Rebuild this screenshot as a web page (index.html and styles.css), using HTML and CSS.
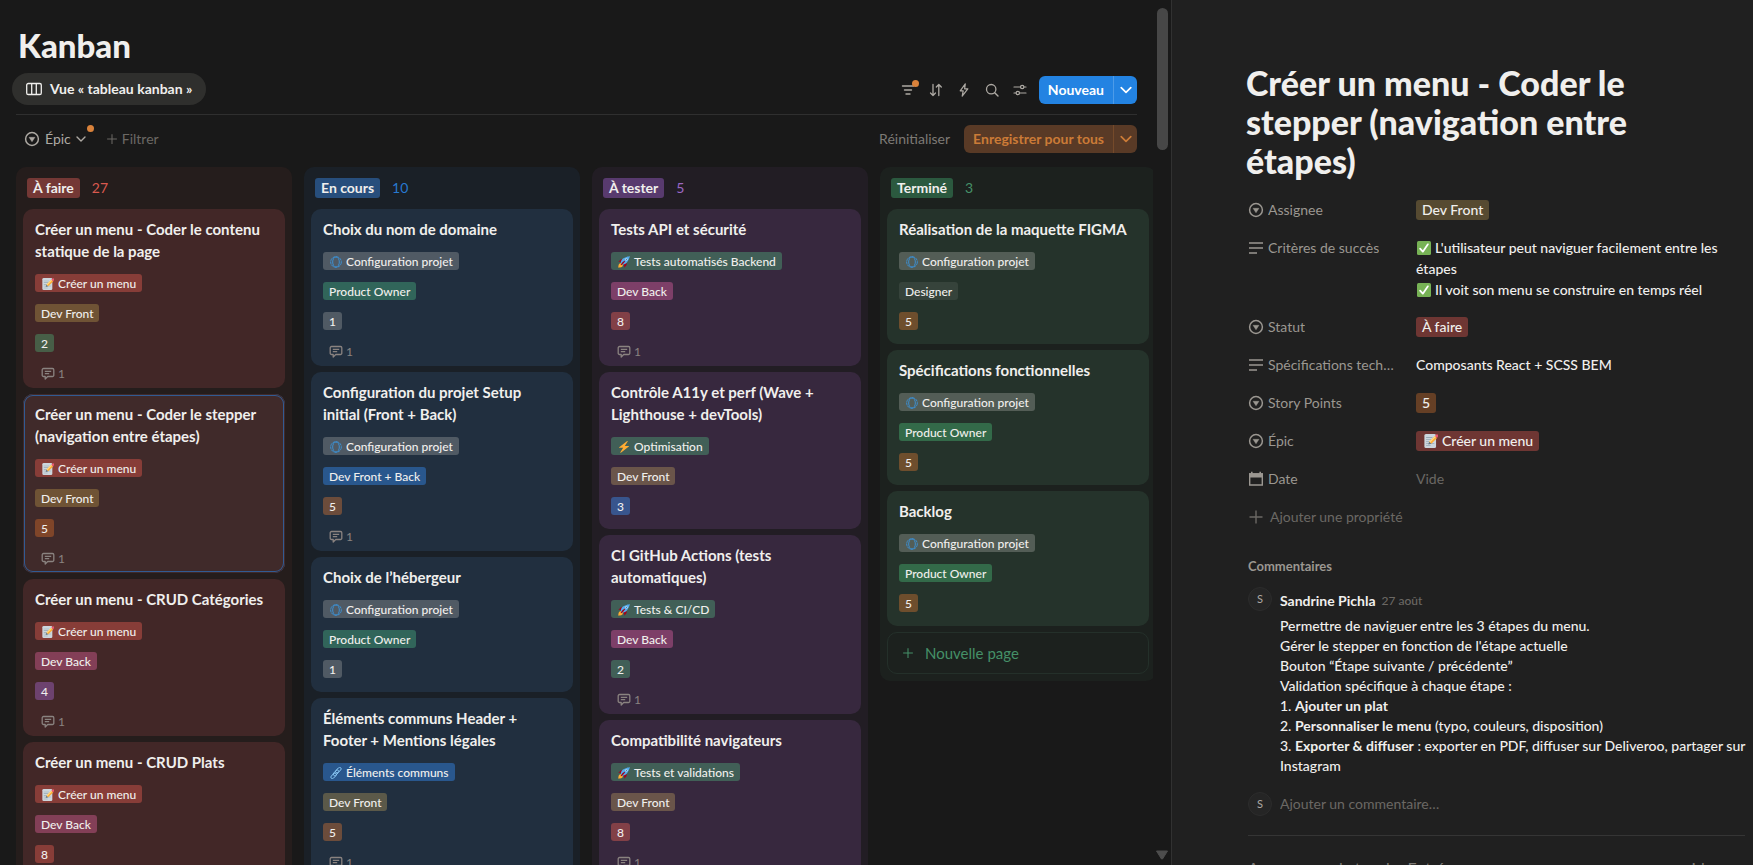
FILE: index.html
```
<!DOCTYPE html>
<html lang="fr">
<head>
<meta charset="utf-8">
<title>Kanban</title>
<link rel="stylesheet" href="styles.css">
</head>
<body>
<svg class="sprite" aria-hidden="true">
  <symbol id="i-memo" viewBox="0 0 36 36"><path fill="#ccd6dd" d="M31 32a4 4 0 0 1-4 4H5a4 4 0 0 1-4-4V4a4 4 0 0 1 4-4h22a4 4 0 0 1 4 4z"/><path fill="#99aab5" d="M27 24a1 1 0 0 1-1 1H6a1 1 0 0 1 0-2h20a1 1 0 0 1 1 1zM18 19a1 1 0 0 1-1 1H6a1 1 0 0 1 0-2h11a1 1 0 0 1 1 1zM22 9a1 1 0 0 1-1 1H6a1 1 0 0 1 0-2h15a1 1 0 0 1 1 1zM19 14a1 1 0 0 1-1 1H6a1 1 0 0 1 0-2h12a1 1 0 0 1 1 1zM17 29H6a1 1 0 0 0 0 2h11z"/><path fill="#66757f" d="M11 27l2.600-7.500 5.300 5.300z"/><path fill="#ffac33" d="M13.400 19.600 28 5l5.500 5.500-14.700 14.600z"/><path fill="#ffd983" d="M13.400 19.600 28 5l2.500 2.500-14.700 14.600z"/><path fill="#ea596e" d="M28 5l3.500-3.500a2.500 2.500 0 0 1 3.600 0l1 1a2.500 2.500 0 0 1 0 3.600L33.500 10.500z"/></symbol>
  <symbol id="i-globe" viewBox="0 0 36 36"><g fill="none" stroke="#3d8fd0"><circle cx="18" cy="18" r="16" stroke-width="3" stroke-dasharray="9 1.500"/><ellipse cx="18" cy="18" rx="10" ry="15" stroke-width="3"/></g></symbol>
  <symbol id="i-rocket" viewBox="0 0 36 36"><path fill="#a0041e" d="M1 17l8-7 16 1 1 16-7 8s.1-5.400-2-10-5-6-7-7-9-1-9-1z"/><path fill="#ffac33" d="M.9 35s-.1-9 3-12 8.500-2.500 10 0 1 7-1.500 9.500S.9 35 .9 35z"/><path fill="#55acee" d="M35.500.5s-10.500 0-21.500 8c-6 5-6 14-4 16s11 2 16-4c8-11 9.500-20 9.500-20z"/><path fill="#a0041e" d="M8.500 27.500c-2-2 9-14 13-14 1 4-11 16-13 14z"/><circle cx="25" cy="10" r="3.500" fill="#e1e8ed"/><circle cx="25" cy="10" r="2" fill="#226699"/></symbol>
  <symbol id="i-bolt-e" viewBox="0 0 36 36"><path fill="#ffac33" d="M33 15.500c-.2-.4-.6-.5-1-.5H20.500L29 1.500c.5-1-.4-1.800-1.400-1.200L3.500 18.800c-.8.600-.5 1.700.5 1.700h11.500L7 34c-.6 1 .5 2 1.500 1.300L32.600 16.800c.4-.3.600-.8.400-1.300z"/></symbol>
  <symbol id="i-link" viewBox="0 0 36 36"><g fill="none" stroke="#8ccaf7" stroke-width="2.800"><rect x="15" y="5" width="20" height="9" rx="4.500" transform="rotate(-45 25 9.500)"/><rect x="8" y="13" width="20" height="9" rx="4.500" transform="rotate(-45 18 17.500)"/><rect x="1" y="22" width="20" height="9" rx="4.500" transform="rotate(-45 11 26.500)"/></g></symbol>
  <symbol id="i-check" viewBox="0 0 36 36"><rect width="36" height="36" rx="4" fill="#77b255"/><path d="M8 19.500l7 8L28 8.500" fill="none" stroke="#fff" stroke-width="4.500" stroke-linecap="round" stroke-linejoin="round"/></symbol>
  <symbol id="i-msg" viewBox="0 0 14 14"><path d="M2.500 1.500h9a1.300 1.300 0 0 1 1.300 1.300v5.400a1.300 1.300 0 0 1-1.300 1.300H6.700L4.200 12V9.500H2.500a1.300 1.300 0 0 1-1.300-1.300V2.800a1.300 1.300 0 0 1 1.300-1.300zM3.800 4.300h6.400M3.800 6.700h4.400" fill="none" stroke="currentColor" stroke-width="1.300" stroke-linejoin="round"/></symbol>
  <symbol id="i-select" viewBox="0 0 16 16"><circle cx="8" cy="8" r="6.400" fill="none" stroke="currentColor" stroke-width="1.500"/><path d="M5 6.300h6L8 10.800z" fill="currentColor" stroke="currentColor" stroke-width=".4" stroke-linejoin="round"/></symbol>
  <symbol id="i-text" viewBox="0 0 16 16"><path d="M1 3h14M1 8h14M1 13h8" stroke="currentColor" stroke-width="1.600"/></symbol>
  <symbol id="i-cal" viewBox="0 0 16 16"><path d="M1.700 3h12.600v11H1.700z" fill="none" stroke="currentColor" stroke-width="1.400"/><path d="M1 2.300h14v4.200H1zM3 .8h1.600v2H3zM11.400.8H13v2h-1.600z" fill="currentColor"/></symbol>
  <symbol id="i-plus" viewBox="0 0 16 16"><path d="M8 1.500v13M1.500 8h13" stroke="currentColor" stroke-width="1.400"/></symbol>
  <symbol id="i-chev" viewBox="0 0 10 10"><path d="M1 3l4 4 4-4" fill="none" stroke="currentColor" stroke-width="1.400" stroke-linecap="round" stroke-linejoin="round"/></symbol>
</svg>

<div class="app">
  <main class="pane">
    <div class="content">
      <header class="head">
        <h1>Kanban</h1>
        <div class="toolbar">
          <button class="view" type="button">
            <svg class="ic16" viewBox="0 0 16 16"><path d="M2.300 2.500h11.400a1.600 1.600 0 0 1 1.600 1.600v7.800a1.600 1.600 0 0 1-1.600 1.600H2.300a1.600 1.600 0 0 1-1.600-1.600V4.100a1.600 1.600 0 0 1 1.600-1.600zM5.700 2.500v11M10.300 2.500v11" fill="none" stroke="currentColor" stroke-width="1.300"/></svg>
            Vue « tableau kanban »
          </button>
          <div class="tools">
            <button class="tool" type="button" aria-label="Filtrer la vue"><svg class="ic16" viewBox="0 0 16 16"><path d="M2.500 4h11M4.500 8h7M6 12h4" fill="none" stroke="currentColor" stroke-width="1.400" stroke-linecap="round"/></svg><span class="dot dot-tool"></span></button>
            <button class="tool" type="button" aria-label="Trier"><svg class="ic16" viewBox="0 0 16 16"><path d="M5 2.500v11M2.500 11L5 13.500 7.500 11M10.800 13.500v-11M8.300 5l2.500-2.500L13.300 5" fill="none" stroke="currentColor" stroke-width="1.300" stroke-linecap="round" stroke-linejoin="round"/></svg></button>
            <button class="tool" type="button" aria-label="Automatisations"><svg class="ic16" viewBox="0 0 16 16"><path d="M9.300 1.800L4.200 8.800h3l-1 5.400 5.600-7.400H8.600z" fill="none" stroke="currentColor" stroke-width="1.200" stroke-linejoin="round"/></svg></button>
            <button class="tool" type="button" aria-label="Rechercher"><svg class="ic16" viewBox="0 0 16 16"><circle cx="7.200" cy="7.200" r="4.700" fill="none" stroke="currentColor" stroke-width="1.300"/><path d="M10.700 10.700l3.300 3.300" stroke="currentColor" stroke-width="1.400" stroke-linecap="round"/></svg></button>
            <button class="tool" type="button" aria-label="Paramètres"><svg class="ic16" viewBox="0 0 16 16"><g fill="none" stroke="currentColor" stroke-width="1.200" stroke-linecap="round"><path d="M2 5h6.500M12 5h2M2 11h2M7.500 11H14"/><circle cx="10.200" cy="5" r="1.700"/><circle cx="5.800" cy="11" r="1.700"/></g></svg></button>
            <div class="split split-blue">
              <button type="button">Nouveau</button><button class="more" type="button" aria-label="Modèles"><svg class="ic12"><use href="#i-chev"/></svg></button>
            </div>
          </div>
        </div>
      </header>

      <div class="filters">
        <button class="filter" type="button"><svg class="ic16"><use href="#i-select"/></svg>Épic<svg class="ic10"><use href="#i-chev"/></svg><span class="dot dot-filter"></span></button>
        <button class="add-filter" type="button"><svg class="ic12"><use href="#i-plus"/></svg>Filtrer</button>
        <button class="reset" type="button">Réinitialiser</button>
        <div class="split split-orange">
          <button type="button">Enregistrer pour tous</button><button class="more" type="button" aria-label="Plus"><svg class="ic12"><use href="#i-chev"/></svg></button>
        </div>
      </div>

      <div class="board">
        <section class="col red">
          <div class="col-head"><h2 class="status">À faire</h2><span class="count">27</span></div>
          <article class="card has-msg"><h3>Créer un menu - Coder le contenu statique de la page</h3>
            <span class="tag t-red"><svg class="emo"><use href="#i-memo"/></svg>Créer un menu</span><span class="tag t-yellow">Dev Front</span><span class="tag t-green">2</span>
            <span class="msg"><svg class="ic14"><use href="#i-msg"/></svg>1</span></article>
          <article class="card has-msg selected"><h3>Créer un menu - Coder le stepper (navigation entre étapes)</h3>
            <span class="tag t-red"><svg class="emo"><use href="#i-memo"/></svg>Créer un menu</span><span class="tag t-yellow">Dev Front</span><span class="tag t-orange">5</span>
            <span class="msg"><svg class="ic14"><use href="#i-msg"/></svg>1</span></article>
          <article class="card has-msg"><h3>Créer un menu - CRUD Catégories</h3>
            <span class="tag t-red"><svg class="emo"><use href="#i-memo"/></svg>Créer un menu</span><span class="tag t-pink">Dev Back</span><span class="tag t-purple">4</span>
            <span class="msg"><svg class="ic14"><use href="#i-msg"/></svg>1</span></article>
          <article class="card has-msg"><h3>Créer un menu - CRUD Plats</h3>
            <span class="tag t-red"><svg class="emo"><use href="#i-memo"/></svg>Créer un menu</span><span class="tag t-pink">Dev Back</span><span class="tag t-red">8</span>
            <span class="msg"><svg class="ic14"><use href="#i-msg"/></svg>1</span></article>
        </section>

        <section class="col blue">
          <div class="col-head"><h2 class="status">En cours</h2><span class="count">10</span></div>
          <article class="card has-msg"><h3>Choix du nom de domaine</h3>
            <span class="tag t-gray"><svg class="emo"><use href="#i-globe"/></svg>Configuration projet</span><span class="tag t-green">Product Owner</span><span class="tag t-gray">1</span>
            <span class="msg"><svg class="ic14"><use href="#i-msg"/></svg>1</span></article>
          <article class="card has-msg"><h3>Configuration du projet Setup initial (Front + Back)</h3>
            <span class="tag t-gray"><svg class="emo"><use href="#i-globe"/></svg>Configuration projet</span><span class="tag t-blue">Dev Front + Back</span><span class="tag t-orange">5</span>
            <span class="msg"><svg class="ic14"><use href="#i-msg"/></svg>1</span></article>
          <article class="card"><h3>Choix de l’hébergeur</h3>
            <span class="tag t-gray"><svg class="emo"><use href="#i-globe"/></svg>Configuration projet</span><span class="tag t-green">Product Owner</span><span class="tag t-gray">1</span></article>
          <article class="card has-msg"><h3>Éléments communs Header + Footer + Mentions légales</h3>
            <span class="tag t-blue"><svg class="emo"><use href="#i-link"/></svg>Éléments communs</span><span class="tag t-yellow">Dev Front</span><span class="tag t-orange">5</span>
            <span class="msg"><svg class="ic14"><use href="#i-msg"/></svg>1</span></article>
        </section>

        <section class="col purple">
          <div class="col-head"><h2 class="status">À tester</h2><span class="count">5</span></div>
          <article class="card has-msg"><h3>Tests API et sécurité</h3>
            <span class="tag t-green"><svg class="emo"><use href="#i-rocket"/></svg>Tests automatisés Backend</span><span class="tag t-pink">Dev Back</span><span class="tag t-red">8</span>
            <span class="msg"><svg class="ic14"><use href="#i-msg"/></svg>1</span></article>
          <article class="card"><h3>Contrôle A11y et perf (Wave + Lighthouse + devTools)</h3>
            <span class="tag t-green"><svg class="emo"><use href="#i-bolt-e"/></svg>Optimisation</span><span class="tag t-yellow">Dev Front</span><span class="tag t-blue">3</span></article>
          <article class="card has-msg"><h3>CI GitHub Actions (tests automatiques)</h3>
            <span class="tag t-green"><svg class="emo"><use href="#i-rocket"/></svg>Tests &amp; CI/CD</span><span class="tag t-pink">Dev Back</span><span class="tag t-green">2</span>
            <span class="msg"><svg class="ic14"><use href="#i-msg"/></svg>1</span></article>
          <article class="card has-msg"><h3>Compatibilité navigateurs</h3>
            <span class="tag t-green"><svg class="emo"><use href="#i-rocket"/></svg>Tests et validations</span><span class="tag t-yellow">Dev Front</span><span class="tag t-red">8</span>
            <span class="msg"><svg class="ic14"><use href="#i-msg"/></svg>1</span></article>
        </section>

        <section class="col green">
          <div class="col-head"><h2 class="status">Terminé</h2><span class="count">3</span></div>
          <article class="card"><h3>Réalisation de la maquette FIGMA</h3>
            <span class="tag t-gray"><svg class="emo"><use href="#i-globe"/></svg>Configuration projet</span><span class="tag t-plain">Designer</span><span class="tag t-orange">5</span></article>
          <article class="card"><h3>Spécifications fonctionnelles</h3>
            <span class="tag t-gray"><svg class="emo"><use href="#i-globe"/></svg>Configuration projet</span><span class="tag t-green">Product Owner</span><span class="tag t-orange">5</span></article>
          <article class="card"><h3>Backlog</h3>
            <span class="tag t-gray"><svg class="emo"><use href="#i-globe"/></svg>Configuration projet</span><span class="tag t-green">Product Owner</span><span class="tag t-orange">5</span></article>
          <button class="new-page" type="button"><svg class="ic12"><use href="#i-plus"/></svg>Nouvelle page</button>
        </section>
      </div>
    </div>
    <div class="scroll" aria-hidden="true"><div class="thumb"></div><svg class="arrow" viewBox="0 0 14 10"><path d="M1.500 1h11L7.500 9h-1z" fill="#4d4d4d" stroke="#4d4d4d" stroke-linejoin="round"/></svg></div>
  </main>

  <aside class="side">
    <h1>Créer un menu - Coder le stepper (navigation entre étapes)</h1>
    <dl class="props">
      <dt><svg class="ic16"><use href="#i-select"/></svg><span>Assignee</span></dt><dd><span class="tag big b-yellow">Dev Front</span></dd>
      <dt><svg class="ic16"><use href="#i-text"/></svg><span>Critères de succès</span></dt><dd><svg class="emo14"><use href="#i-check"/></svg>L'utilisateur peut naviguer facilement entre les étapes<br><svg class="emo14"><use href="#i-check"/></svg>Il voit son menu se construire en temps réel</dd>
      <dt><svg class="ic16"><use href="#i-select"/></svg><span>Statut</span></dt><dd><span class="tag big b-red">À faire</span></dd>
      <dt><svg class="ic16"><use href="#i-text"/></svg><span>Spécifications techniques</span></dt><dd>Composants React + SCSS BEM</dd>
      <dt><svg class="ic16"><use href="#i-select"/></svg><span>Story Points</span></dt><dd><span class="tag big b-orange">5</span></dd>
      <dt><svg class="ic16"><use href="#i-select"/></svg><span>Épic</span></dt><dd><span class="tag big b-red"><svg class="emo"><use href="#i-memo"/></svg>Créer un menu</span></dd>
      <dt><svg class="ic16"><use href="#i-cal"/></svg><span>Date</span></dt><dd class="empty">Vide</dd>
    </dl>
    <button class="add-prop" type="button"><svg class="ic16"><use href="#i-plus"/></svg>Ajouter une propriété</button>

    <section class="comments">
      <h2>Commentaires</h2>
      <div class="comment">
        <span class="avatar">S</span>
        <div class="body">
          <p class="who"><strong>Sandrine Pichla</strong><time>27 août</time></p>
          <p>Permettre de naviguer entre les 3 étapes du menu.<br>Gérer le stepper en fonction de l'étape actuelle<br>Bouton “Étape suivante / précédente”<br>Validation spécifique à chaque étape :<br>1. <strong>Ajouter un plat</strong><br>2. <strong>Personnaliser le menu</strong> (typo, couleurs, disposition)<br>3. <strong>Exporter &amp; diffuser</strong> : exporter en PDF, diffuser sur Deliveroo, partager sur Instagram</p>
        </div>
      </div>
      <div class="reply"><span class="avatar">S</span><input type="text" aria-label="Commentaire" placeholder="Ajouter un commentaire…"></div>
    </section>
    <p class="hint">Appuyez sur la touche Entrée pour commencer avec une page vide, ou créez un modèle</p>
  </aside>
</div>
</body>
</html>
```
FILE: styles.css
```
* { box-sizing: border-box; }
body {
  margin: 0;
  background: #191919;
  color: #f0efed;
  font: 14px/20px Lato, "Noto Sans", sans-serif;
}
h1, h2, h3, p, dl, dd { margin: 0; }
button {
  display: inline-flex;
  align-items: center;
  margin: 0;
  padding: 0;
  border: 0;
  background: none;
  color: inherit;
  font: inherit;
}
svg { flex: none; }
.sprite { position: absolute; width: 0; height: 0; }
.ic10 { width: 10px; height: 10px; }
.ic12 { width: 12px; height: 12px; }
.ic14 { width: 14px; height: 14px; }
.ic16 { width: 16px; height: 16px; }

.app { display: flex; height: 100vh; overflow: hidden; }
.pane { display: flex; flex: 1; min-width: 0; }
.content { flex: 1; min-width: 0; overflow: hidden; }

/* header */
.head {
  margin: 0 16px;
  padding: 26px 0 9px;
  border-bottom: 1px solid #2f2f2f;
}
.head h1 { padding-left: 2px; font-size: 33px; line-height: 38px; font-weight: 900; }
.toolbar { display: flex; align-items: center; justify-content: space-between; height: 32px; margin-top: 9px; }
.view {
  gap: 8px;
  height: 32px;
  margin-left: -4px;
  padding: 0 14px;
  border-radius: 16px;
  background: #2f2f2d;
  font-weight: 700;
}
.tools { display: flex; align-items: center; padding-top: 2px; }
.tool { position: relative; justify-content: center; width: 28px; height: 28px; color: #ada9a3; }
.dot { position: absolute; width: 7px; height: 7px; border-radius: 50%; background: #d9823b; }
.dot-tool { top: 4px; right: 3px; }
.dot-filter { top: 0; right: -8px; }
.split { display: flex; height: 28px; border-radius: 6px; overflow: hidden; font-weight: 700; }
.split button { padding: 0 9px; }
.split .more { justify-content: center; width: 24px; padding: 0; }
.split-blue { margin-left: 5px; background: #2383e2; color: #fff; }
.split-blue .more { border-left: 1px solid #4d9be8; }
.split-orange { background: #593a26; color: #cb7b37; }
.split-orange .more { border-left: 1px solid #754a2a; }

.filters { display: flex; align-items: center; height: 28px; margin: 10px 16px 14px 24px; color: #7d7a75; }
.filter { position: relative; gap: 5px; height: 28px; color: #ada9a3; }
.add-filter { gap: 4px; margin-left: 20px; color: #6b6864; }
.reset { margin-left: auto; margin-right: 14px; }

/* board */
.board { display: flex; align-items: flex-start; gap: 12px; margin-left: 16px; overflow: hidden; }
.col {
  display: flex;
  flex: none;
  flex-direction: column;
  gap: 6px;
  width: 276px;
  padding: 11px 7px 7px;
  border-radius: 10px;
}
.col-head { display: flex; align-items: center; gap: 12px; margin: 0 4px 5px; }
.status { padding: 0 6px; border-radius: 3px; font-size: 14px; line-height: 20px; font-weight: 700; }
.card {
  display: flex;
  flex-direction: column;
  align-items: flex-start;
  gap: 12px;
  padding: 9px 12px 14px;
  border-radius: 10px;
}
.has-msg { padding-bottom: 6px; }
.card h3 { font-size: 15px; line-height: 22px; font-weight: 700; }
.tag {
  display: inline-flex;
  align-items: center;
  height: 18px;
  padding: 1px 6px 0;
  border-radius: 3px;
  font-size: 12px;
  line-height: 18px;
  font-weight: 500;
  white-space: nowrap;
}
.emo { width: 12px; height: 12px; margin: 0 4px 0 1px; }
.msg { display: flex; align-items: center; gap: 3px; height: 18px; padding: 1px 0 0 6px; color: #8a8380; font-size: 12px; line-height: 18px; }

.red { background: #251d1c; }
.red .status { background: #743835; }
.red .count { color: #d9594f; }
.red .card { background: #422727; }
.red .selected { background: #402a2a; box-shadow: inset 0 0 0 1px #402a2a, inset 0 0 0 2px #315b93; }
.blue { background: #1a2027; }
.blue .status { background: #274e7c; }
.blue .count { color: #2779d0; }
.blue .card { background: #212f3f; }
.purple { background: #221d24; }
.purple .status { background: #583a6e; }
.purple .count { color: #9d68c4; }
.purple .card { background: #37283e; }
.green { background: #1c211e; }
.green .status { background: #2b593f; }
.green .count { color: #459068; }
.green .card { background: #25332b; }

.t-red { background: #873d38; }
.t-yellow { background: #6f5335; }
.t-green { background: #475e47; }
.t-orange { background: #7f4529; }
.t-pink { background: #833f57; }
.t-purple { background: #6d426f; }
.blue .t-gray { background: #505a64; }
.blue .t-green { background: #31655a; }
.blue .t-blue { background: #29578d; }
.blue .t-orange { background: #6c4c3b; }
.blue .t-yellow { background: #5b5949; }
.purple .t-green { background: #415f57; }
.purple .t-pink { background: #7d3f68; }
.purple .t-red { background: #824047; }
.purple .t-yellow { background: #6a554a; }
.purple .t-blue { background: #38558d; }
.green .t-gray { background: #535d56; }
.green .t-green { background: #336a49; }
.green .t-orange { background: #6e4e2d; }
.green .t-plain { background: #36433b; }

.new-page {
  gap: 11px;
  height: 42px;
  padding-left: 14px;
  border: 1px solid #24302a;
  border-radius: 10px;
  color: #459068;
  font-size: 15px;
}

/* scroll track */
.scroll { display: flex; flex-direction: column; align-items: center; justify-content: space-between; width: 18px; padding: 8px 0 5px; }
.thumb { width: 11px; height: 142px; border-radius: 6px; background: #474747; }
.arrow { width: 14px; height: 10px; }

/* detail panel */
.side {
  flex: 0 1 582px;
  padding: 63px 8px 0 76px;
  border-left: 1px solid #313131;
  background: #202020;
  overflow: hidden;
}
.side h1 { max-width: 420px; margin-left: -2px; font-size: 34px; line-height: 39px; font-weight: 900; }
.props { display: grid; grid-template-columns: 168px minmax(0, 1fr); row-gap: 5px; margin-top: 13px; line-height: 21px; }
.props dt { display: flex; align-items: center; gap: 4px; height: 33px; padding-right: 20px; color: #9b9791; }
.props dt span { overflow: hidden; text-overflow: ellipsis; white-space: nowrap; }
.props dd { padding: 6px 24px 5px 0; font-weight: 500; }
.props .empty { color: #6b6864; font-weight: 400; }
.big { height: 20px; padding-top: 0; font-size: 14px; line-height: 20px; vertical-align: bottom; }
.big .emo { width: 14px; height: 14px; margin: 0 4px 0 2px; }
.emo14 { width: 14px; height: 14px; margin: 0 4px 0 1px; vertical-align: -2px; }
.b-yellow { background: #564a31; }
.b-red { background: #6e3633; }
.b-orange { background: #653f25; }
.add-prop { gap: 6px; height: 33px; margin-top: 5px; color: #6b6864; }

.comments { margin-top: 23px; }
.comments h2 { color: #9b9791; font-size: 13px; line-height: 20px; font-weight: 700; }
.comment { display: flex; gap: 8px; margin: 11px -6px 0 0; }
.avatar {
  flex: none;
  width: 24px;
  height: 24px;
  border: 1px solid #2c2c2c;
  border-radius: 50%;
  background: #252525;
  color: #ada9a3;
  font-size: 11px;
  line-height: 22px;
  text-align: center;
}
.who { display: flex; gap: 6px; height: 29px; padding-top: 4px; }
.who time { color: #6b6864; font-size: 12px; }
.body { font-weight: 500; }
.body strong { font-weight: 700; }
.reply { display: flex; gap: 8px; align-items: center; margin-top: 16px; }
.reply input { flex: 1; padding: 0; border: 0; background: none; color: inherit; font: inherit; outline: 0; }
.reply input::placeholder { color: #6b6864; opacity: 1; }
.hint { margin-top: 19px; padding-top: 20px; border-top: 1px solid #353535; color: #7d7a75; font-size: 16px; line-height: 24px; white-space: nowrap; }
```
